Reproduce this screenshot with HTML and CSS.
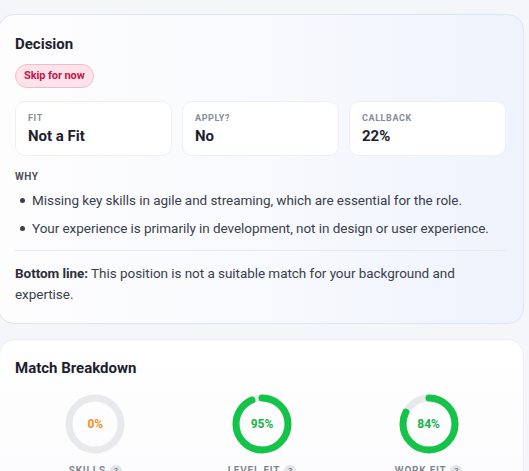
FILE: index.html
```html
<!DOCTYPE html>
<html lang="en">
<head>
  <meta charset="UTF-8" />
  <title>Job Match</title>
  <link rel="stylesheet" href="styles.css">
</head>
<body>

  <div class="page">

    <section class="card decision">
      <h2>Decision</h2>
      <span class="pill">Skip for now</span>

      <div class="stats">
        <div class="stat">
          <div class="stat-label">Fit</div>
          <div class="stat-value">Not a Fit</div>
        </div>
        <div class="stat">
          <div class="stat-label">Apply?</div>
          <div class="stat-value">No</div>
        </div>
        <div class="stat">
          <div class="stat-label">Callback</div>
          <div class="stat-value">22%</div>
        </div>
      </div>

      <div class="why-title">Why</div>
      <ul class="why">
        <li>Missing key skills in agile and streaming, which are essential for the role.</li>
        <li>Your experience is primarily in development, not in design or user experience.</li>
      </ul>

      <p class="bottom-line"><b>Bottom line:</b> This position is not a suitable match for your background and expertise.</p>
    </section>

    <section class="card breakdown">
      <h2>Match Breakdown</h2>

      <div class="rings">
        <div class="ring-item">
          <div class="ring">
            <svg viewBox="0 0 60 60" width="60" height="60">
              <circle class="track" cx="30" cy="30" r="26" />
            </svg>
            <span class="ring-text orange">0%</span>
          </div>
          <div class="ring-label">Skills <span class="help">?</span></div>
        </div>
        <div class="ring-item">
          <div class="ring">
            <svg viewBox="0 0 60 60" width="60" height="60">
              <circle class="track" cx="30" cy="30" r="26" />
              <circle class="bar" cx="30" cy="30" r="26" stroke-dasharray="152 163.4" />
            </svg>
            <span class="ring-text green">95%</span>
          </div>
          <div class="ring-label">Level Fit <span class="help">?</span></div>
        </div>
        <div class="ring-item">
          <div class="ring">
            <svg viewBox="0 0 60 60" width="60" height="60">
              <circle class="track" cx="30" cy="30" r="26" />
              <circle class="bar" cx="30" cy="30" r="26" stroke-dasharray="134 163.4" />
            </svg>
            <span class="ring-text green">84%</span>
          </div>
          <div class="ring-label">Work Fit <span class="help">?</span></div>
        </div>
      </div>
    </section>

  </div>

</body>
</html>
```

FILE: styles.css
```css
* {
  box-sizing: border-box;
  margin: 0;
  padding: 0;
  font-family: Roboto, 'Noto Sans', sans-serif;
}

body {
  background-color: #f4f6fa;
  color: #2b2f3a;
}

.page {
  margin-left: -2px;
  padding: 14px 5px 0 0;
}

.card {
  border-radius: 16px;
  padding: 19px 17px 18px 16px;
}

.card h2 {
  font-size: 15px;
  line-height: 20px;
  font-weight: 700;
  color: #1d212c;
}

/* decision card */

.decision {
  background: linear-gradient(90deg, #fdfdfe 0%, #f9fafd 45%, #eef3fd 100%);
  border: 1px solid #dce6f5;
}

.pill {
  display: inline-block;
  margin-top: 10px;
  padding: 4px 8px;
  font-size: 11px;
  line-height: 14px;
  font-weight: 700;
  letter-spacing: -0.1px;
  color: #c5164a;
  background-color: #fde3ea;
  border: 1px solid #f8b9c9;
  border-radius: 12px;
}

.stats {
  display: grid;
  grid-template-columns: repeat(3, 1fr);
  gap: 10px;
  margin-top: 13px;
}

.stat {
  background-color: #fff;
  border: 1px solid #eef0f4;
  border-radius: 10px;
  padding: 10px 12px 9px;
}

.stat-label {
  font-size: 9px;
  line-height: 12px;
  font-weight: 700;
  letter-spacing: 0.6px;
  text-transform: uppercase;
  color: #868b98;
}

.stat-value {
  margin-top: 3px;
  font-size: 15px;
  line-height: 19px;
  font-weight: 700;
  color: #1d212c;
}

.why-title {
  margin-top: 14px;
  font-size: 10px;
  line-height: 14px;
  font-weight: 700;
  letter-spacing: 0.6px;
  text-transform: uppercase;
  color: #4a4f5b;
}

.why {
  list-style: none;
  margin-top: 6px;
}

.why li {
  position: relative;
  padding-left: 17px;
  font-size: 13.5px;
  line-height: 20px;
  letter-spacing: -0.05px;
  color: #3a3f4b;
  margin-bottom: 8px;
}

.why li::before {
  content: "";
  position: absolute;
  left: 5px;
  top: 8px;
  width: 5px;
  height: 5px;
  border-radius: 50%;
  background-color: #3a3f4b;
}

.bottom-line {
  border-top: 1px solid #e6e9ef;
  margin-top: 12px;
  padding-top: 12px;
  font-size: 13.5px;
  line-height: 21px;
  letter-spacing: -0.05px;
  color: #3a3f4b;
}

.bottom-line b {
  color: #2b2f3a;
}

/* match breakdown card */

.breakdown {
  margin-top: 15px;
  margin-left: 1px;
  background: linear-gradient(180deg, #ffffff 0%, #fbfbfd 100%);
  border: 1px solid #eceef2;
  padding-top: 18px;
  padding-left: 15px;
}

.rings {
  display: grid;
  grid-template-columns: repeat(3, 1fr);
  margin: 16px -6px 0 -3px;
}

.ring-item {
  display: flex;
  flex-direction: column;
  align-items: center;
}

.ring {
  position: relative;
  width: 60px;
  height: 60px;
}

.ring svg {
  display: block;
  transform: rotate(-90deg);
}

.ring circle {
  fill: none;
  stroke-width: 7;
}

.ring .track {
  stroke: #e8e9ec;
}

.ring .bar {
  stroke: #14c449;
  stroke-linecap: round;
}

.ring-text {
  position: absolute;
  inset: 0;
  display: flex;
  align-items: center;
  justify-content: center;
  font-size: 12px;
  font-weight: 700;
}

.orange {
  color: #f5921e;
}

.green {
  color: #17b44a;
}

.ring-label {
  margin-top: 10px;
  display: flex;
  align-items: center;
  gap: 4px;
  font-size: 10px;
  line-height: 14px;
  font-weight: 600;
  letter-spacing: 0.8px;
  text-transform: uppercase;
  color: #7d8290;
}

.help {
  display: inline-flex;
  align-items: center;
  justify-content: center;
  width: 12px;
  height: 12px;
  border-radius: 50%;
  background-color: #e1e3e8;
  color: #6b7080;
  font-size: 8px;
  letter-spacing: 0;
}
```
